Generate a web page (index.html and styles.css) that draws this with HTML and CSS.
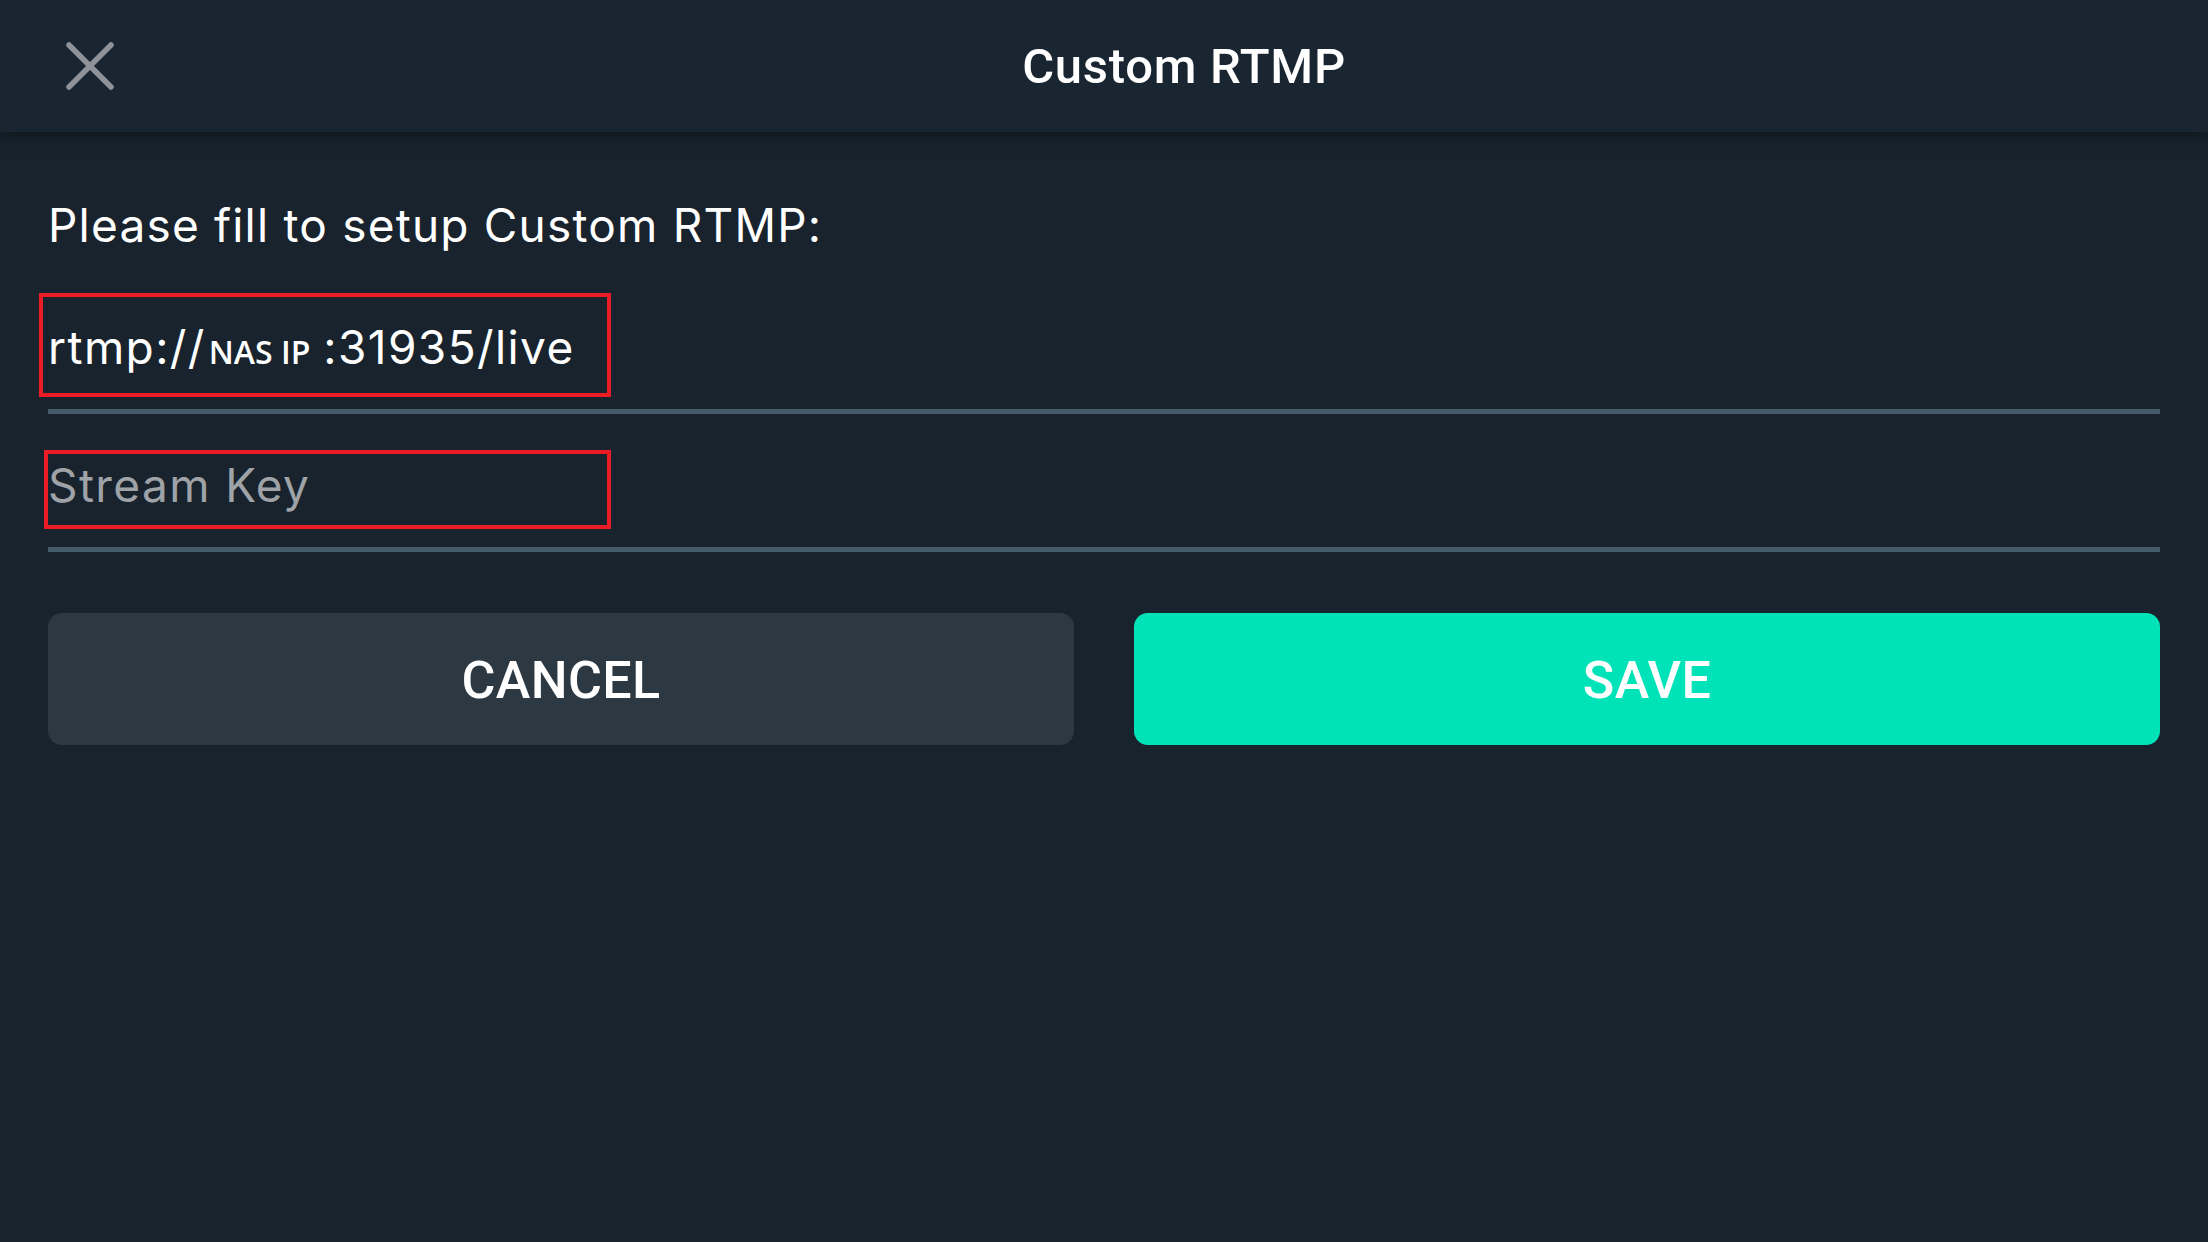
FILE: index.html
```html
<!DOCTYPE html>
<html lang="en">
<head>
<meta charset="utf-8">
<title>Custom RTMP</title>
<link rel="stylesheet" href="styles.css">
</head>
<body>
<header class="topbar">
  <div class="close-area">
    <svg class="close-icon" width="48" height="48" viewBox="0 0 48 48" aria-label="Close">
      <path d="M3 3 L45 45 M45 3 L3 45" stroke="#8d9398" stroke-width="5.5" stroke-linecap="round" fill="none"/>
    </svg>
  </div>
  <h1 class="title">Custom RTMP</h1>
</header>
<main class="content">
  <p class="prompt">Please fill to setup Custom RTMP:</p>
  <div class="field field-url">
    <span class="value">rtmp://<span class="nas">NAS IP</span>:31935/live<span class="mark mark-url"></span></span>
  </div>
  <div class="field field-key">
    <span class="value placeholder">Stream Key<span class="mark mark-key"></span></span>
  </div>
  <div class="actions">
    <button class="btn btn-cancel">CANCEL</button>
    <button class="btn btn-save">SAVE</button>
  </div>
</main>
</body>
</html>
```
FILE: styles.css
```css
html, body {
  margin: 0;
  padding: 0;
}
body {
  width: 2208px;
  height: 1242px;
  background: #18232d;
  overflow: hidden;
  font-family: "Inter", "Roboto", sans-serif;
  color: #ffffff;
}
.topbar {
  position: relative;
  z-index: 2;
  height: 132px;
  background: #192530;
  display: flex;
  align-items: center;
  box-shadow: 0 3px 14px rgba(6, 10, 14, 0.55);
}
.close-area {
  width: 160px;
  box-sizing: border-box;
  padding-left: 66px;
  display: flex;
  align-items: center;
}
.close-icon {
  display: block;
}
.title {
  flex: 1;
  margin: 0;
  text-align: center;
  font-family: "Roboto", sans-serif;
  font-weight: 500;
  font-size: 49px;
  line-height: 56px;
  letter-spacing: 0.7px;
  color: #ffffff;
  padding-top: 2px;
}
.content {
  padding: 0 48px;
}
.prompt {
  margin: 65px 0 0;
  font-size: 46px;
  line-height: 56px;
  font-weight: 400;
  letter-spacing: 1.2px;
}
.field {
  border-bottom: 5px solid #435b6b;
  font-size: 46px;
  line-height: 56px;
  letter-spacing: 1.4px;
}
.field-url {
  padding-top: 66px;
  padding-bottom: 34px;
}
.field-key {
  padding-top: 43px;
  padding-bottom: 34px;
}
.value {
  position: relative;
  display: inline-block;
  vertical-align: top;
}
.nas {
  font-family: "Open Sans", sans-serif;
  font-weight: 600;
  font-size: 32px;
  line-height: 1;
  letter-spacing: 0;
  margin: 0 13px 0 3px;
}
.placeholder {
  color: #9fa3a7;
}
.mark {
  position: absolute;
  border: 4px solid #ec1c24;
  box-sizing: border-box;
}
.mark-url {
  left: -9px;
  top: -26px;
  width: 572px;
  height: 104px;
}
.mark-key {
  left: -4px;
  top: -7px;
  width: 567px;
  height: 79px;
}
.actions {
  margin-top: 61px;
  display: grid;
  grid-template-columns: 1fr 1fr;
  gap: 60px;
}
.btn {
  height: 132px;
  border: none;
  border-radius: 14px;
  font-family: "Roboto", sans-serif;
  font-weight: 500;
  font-size: 52px;
  letter-spacing: 0.4px;
  color: #ffffff;
  padding: 2px 0 0;
}
.btn-cancel {
  background: #2c3842;
}
.btn-save {
  background: #00e3b9;
}
```
